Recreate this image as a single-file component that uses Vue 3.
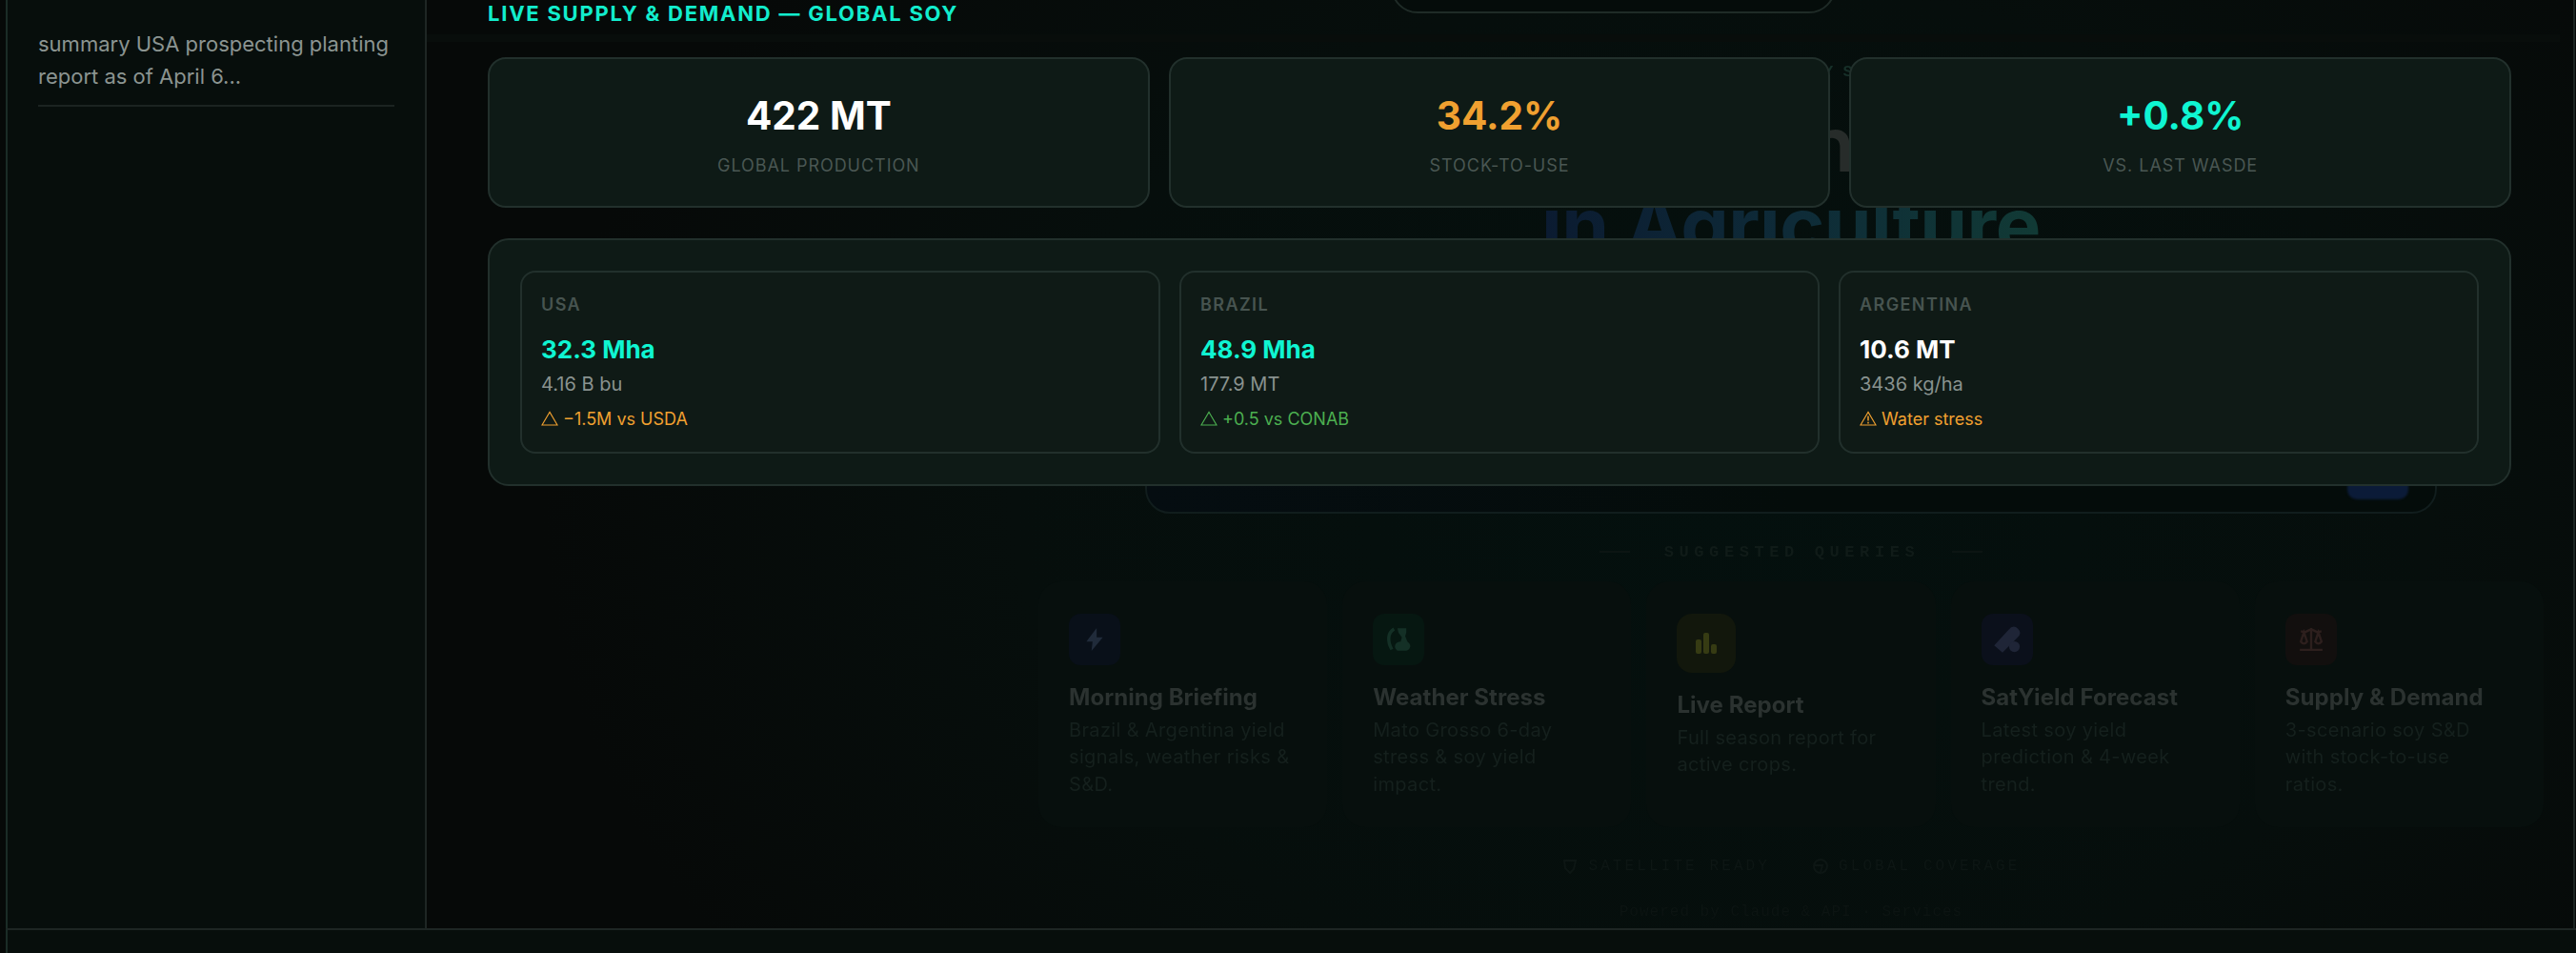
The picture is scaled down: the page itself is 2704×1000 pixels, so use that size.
<script setup>
const stats = [
  { value: '422 MT', label: 'Global production', tone: 'white' },
  { value: '34.2%', label: 'Stock-to-use', tone: 'amber' },
  { value: '+0.8%', label: 'vs. last WASDE', tone: 'mint' },
]
const countries = [
  { name: 'USA', value: '32.3 Mha', sub: '4.16 B bu', note: '−1.5M vs USDA', tone: 'mint', noteTone: 'amber', warn: false },
  { name: 'Brazil', value: '48.9 Mha', sub: '177.9 MT', note: '+0.5 vs CONAB', tone: 'mint', noteTone: 'green', warn: false },
  { name: 'Argentina', value: '10.6 MT', sub: '3436 kg/ha', note: 'Water stress', tone: 'white', noteTone: 'amber', warn: true },
]
const queries = [
  { icon: 'bolt', title: 'Morning Briefing', lines: ['Brazil & Argentina yield', 'signals, weather risks &', 'S&D.'] },
  { icon: 'weather', title: 'Weather Stress', lines: ['Mato Grosso 6-day', 'stress & soy yield', 'impact.'] },
  { icon: 'chart', title: 'Live Report', lines: ['Full season report for', 'active crops.'] },
  { icon: 'sat', title: 'SatYield Forecast', lines: ['Latest soy yield', 'prediction & 4-week', 'trend.'] },
  { icon: 'scale', title: 'Supply & Demand', lines: ['3-scenario soy S&D', 'with stock-to-use', 'ratios.'] },
]
</script>

<template>
  <div class="app">
    <div class="body">
      <aside class="sidebar">
        <p class="history">summary USA prospecting planting<br>report as of April 6...</p>
      </aside>

      <main class="main">
        <div class="backdrop">
          <div class="band"></div>
          <div class="chip"></div>
          <span class="eyebrow">Y S</span>
          <span class="hero-top">n</span>
          <span class="hero">in Agriculture</span>
          <div class="prompt"><div class="send"></div></div>
          <div class="suggest">
            <div class="suggest-title"><i></i><span>SUGGESTED QUERIES</span><i></i></div>
            <div class="cards">
              <div v-for="q in queries" :key="q.title" class="card">
                <div class="icon" :class="q.icon">
                  <svg v-if="q.icon === 'bolt'" width="26" height="26" viewBox="0 0 24 24"><path fill="currentColor" d="M14 1 4 14h6l-1 9 11-13h-6z" /></svg>
                  <svg v-else-if="q.icon === 'weather'" width="28" height="28" viewBox="0 0 24 24"><path fill="none" stroke="currentColor" stroke-width="3" d="M8 2.500C2 6 2 14 6 21" /><path fill="currentColor" d="M11 2h8v4l-1 3 2 5q4 3 2 6-1 2-3 2h-8q-3-2-2-5 1-3 5-3l1-4-3-4z" /></svg>
                  <svg v-else-if="q.icon === 'chart'" width="24" height="24" viewBox="0 0 24 24" fill="currentColor"><rect x="1" y="8" width="6" height="15" rx="2" /><rect x="9" y="1" width="6" height="22" rx="2" /><rect x="17" y="13" width="6" height="10" rx="2" /></svg>
                  <svg v-else-if="q.icon === 'sat'" width="30" height="30" viewBox="0 0 24 24" fill="currentColor"><path d="M1 17 13 4q4-5 8-1 4 4-1 8L8 23z" /><circle cx="18" cy="18" r="4.5" /></svg>
                  <svg v-else width="26" height="26" viewBox="0 0 24 24" fill="none" stroke="currentColor" stroke-width="2.2"><path d="M12 1v20M2 4l4 1 6-3 6 3 4-1M1 22h22M5 5 2 14q3 4 6 0zM19 5l-3 9q3 4 6 0z" /></svg>
                </div>
                <h3>{{ q.title }}</h3>
                <p><template v-for="l in q.lines" :key="l">{{ l }}<br></template></p>
              </div>
            </div>
            <div class="badges">
              <span><svg width="18" height="18" viewBox="0 0 18 18" fill="none" stroke="currentColor" stroke-width="2"><path d="M3 3h12l-2 9-4 4-5-5z" /></svg>SATELLITE READY</span>
              <span><svg width="18" height="18" viewBox="0 0 18 18" fill="none" stroke="currentColor" stroke-width="2"><circle cx="9" cy="9" r="7" /><path d="M3 8h8l-2 7" /></svg>GLOBAL COVERAGE</span>
            </div>
            <div class="powered">Powered by Claude &amp; API · Services</div>
          </div>
        </div>

        <section class="content">
          <h2>LIVE SUPPLY &amp; DEMAND — GLOBAL SOY</h2>
          <div class="stats">
            <div v-for="s in stats" :key="s.label" class="stat">
              <strong :class="s.tone">{{ s.value }}</strong>
              <span>{{ s.label }}</span>
            </div>
          </div>
          <div class="panel">
            <div v-for="c in countries" :key="c.name" class="country">
              <div class="name">{{ c.name }}</div>
              <div class="value" :class="c.tone">{{ c.value }}</div>
              <div class="sub">{{ c.sub }}</div>
              <div class="note" :class="c.noteTone">
                <svg width="18" height="16" viewBox="0 0 18 16" fill="none" stroke="currentColor" stroke-width="1.1">
                  <path d="M9 1.400 17 15H1z" />
                  <path v-if="c.warn" stroke-width="1.5" d="M9 5.500v5M9 11.800v1.600" />
                </svg>{{ c.note }}
              </div>
            </div>
          </div>
        </section>
      </main>
      <div class="edge"></div>
    </div>
    <footer class="footer"></footer>
  </div>
</template>

<style>
body { margin: 0; background: #060908; }
</style>

<style scoped>
.app { width: 2704px; height: 1000px; box-sizing: border-box; padding-left: 6px; overflow: hidden; display: flex; flex-direction: column; background: #060908; font-family: Inter, sans-serif; }
.body { display: flex; height: 974px; }
.sidebar { box-sizing: border-box; width: 442px; padding: 28px 32px 0; border-left: 2px solid #1b2c27; border-right: 2px solid #1e2624; background: #070e0c; }
.history { margin: 0; padding: 1px 0 13px; font-size: 22px; line-height: 34px; color: #8b9491; border-bottom: 2px solid #1b2321; white-space: nowrap; }
.main { position: relative; width: 2253px; overflow: hidden; background: radial-gradient(ellipse 1240px 900px at 1360px 520px, #04100e 0%, #060e0c 60%, #060908 100%); }
.edge { width: 2px; background: #1b2422; }
.footer { height: 24px; border-top: 2px solid #1e2624; border-left: 2px solid #1b2c27; background: #070e0c; }

.content { position: relative; display: flex; flex-direction: column; padding: 0 65px 0 64px; }
h2 { margin: 0; height: 60px; font-size: 22px; line-height: 28px; font-weight: 700; letter-spacing: 1.76px; color: #12edcd; white-space: nowrap; }
.stats { display: flex; gap: 20px; margin-bottom: 32px; }
.stat { box-sizing: border-box; flex: 1; height: 158px; border: 2px solid #22302c; border-radius: 19px; background: #0e1a16; display: flex; flex-direction: column; align-items: center; padding-top: 35px; }
.stat strong { font-size: 40.500px; line-height: 50px; font-weight: 700; }
.stat span { margin-top: 15px; font-size: 18px; line-height: 24px; letter-spacing: .95px; text-transform: uppercase; color: #4a5753; }
.panel { box-sizing: border-box; height: 260px; display: flex; gap: 20px; padding: 32px; border: 2px solid #22302c; border-radius: 22px; background: #0e1a16; }
.country { box-sizing: border-box; flex: 1; border: 2px solid #22302c; border-radius: 16px; background: #0f1a16; padding: 21px 20px; }
.name { font-size: 18px; line-height: 26px; font-weight: 600; letter-spacing: 1.4px; text-transform: uppercase; color: #475450; }
.value { margin-top: 16px; font-size: 26px; line-height: 36px; font-weight: 700; }
.sub { margin-top: 4px; font-size: 20px; line-height: 28px; color: #89928f; }
.note { margin-top: 9px; font-size: 18px; line-height: 28px; }
.note svg { margin-right: 5px; vertical-align: -1px; }
.white { color: #fff; }
.amber { color: #f0a030; }
.mint { color: #0ff5d2; }
.green { color: #4caf50; }

.backdrop { position: absolute; inset: 0; }
.backdrop > * { position: absolute; }
.band { left: 0; right: 14px; top: 36px; height: 8px; background: #080d0b; }
.chip { box-sizing: border-box; left: 1012px; top: -50px; width: 467px; height: 64px; border: 2px solid #1f2b27; border-radius: 28px; background: #050c0a; }
.eyebrow { left: 1466px; top: 64px; font: 700 17px/24px "Liberation Mono", monospace; color: #173029; filter: blur(.7px); }
.hero-top { left: 1450px; top: 111px; font-size: 80px; line-height: 80px; font-weight: 600; color: #272c2a; filter: blur(.7px); }
.hero { left: 1170px; top: 196px; font-size: 80px; line-height: 80px; font-weight: 700; letter-spacing: -.5px; white-space: nowrap; color: transparent; background: linear-gradient(90deg, #0b1b31, #0e2b38 50%, #113a35); background-clip: text; filter: blur(.7px); }
.prompt { box-sizing: border-box; left: 754px; top: 420px; width: 1356px; height: 119px; border: 2px solid #111d1d; border-radius: 26px; background: linear-gradient(90deg, #050d11, #040c0a 50%); display: flex; justify-content: flex-end; align-items: flex-end; padding: 0 28px 13px 0; }
.send { width: 64px; height: 64px; border-radius: 10px; background: #0b1b38; filter: blur(1px); }
.suggest { left: 642px; top: 567px; width: 1580px; display: flex; flex-direction: column; filter: blur(.7px); }
.suggest-title { height: 43px; display: flex; align-items: flex-start; justify-content: center; gap: 36px; font: 700 17px/26px "Liberation Mono", monospace; letter-spacing: 5.6px; color: #101b18; }
.suggest-title i { width: 32px; height: 2px; margin-top: 11px; background: #0c1513; }
.suggest-title span { margin-right: -2px; }
.cards { display: flex; gap: 16px; height: 258px; }
.card { box-sizing: border-box; flex: 1 1 0; padding: 34px 0 0 32px; border-radius: 24px; background: #070f0d; }
.icon { width: 54px; height: 54px; border-radius: 12px; display: flex; align-items: center; justify-content: center; }
.bolt { background: #091019; color: #202b3a; }
.weather { background: #061711; color: #143026; }
.chart { width: 62px; height: 62px; border-radius: 16px; background: #12170c; color: #363b13; }
.sat { background: #0b101b; color: #1f2537; }
.scale { background: #120f0e; color: #2d1f1d; }
h3 { margin: 18px 0 0; font-size: 24px; line-height: 32px; font-weight: 700; letter-spacing: .05px; color: #2b3230; white-space: nowrap; }
.card p { margin: 4px 0 0; font-size: 20px; line-height: 28.400px; letter-spacing: .35px; color: #15201d; white-space: nowrap; }
.badges { display: flex; justify-content: center; gap: 44px; margin-top: 29px; font: 16px/24px "Liberation Mono", monospace; letter-spacing: 3.1px; color: #0d1614; }
.badges span { display: flex; align-items: center; gap: 10px; }
.powered { margin-top: 24px; text-align: center; font: 16px/24px "Liberation Mono", monospace; letter-spacing: 1px; color: #0c1412; }
</style>
